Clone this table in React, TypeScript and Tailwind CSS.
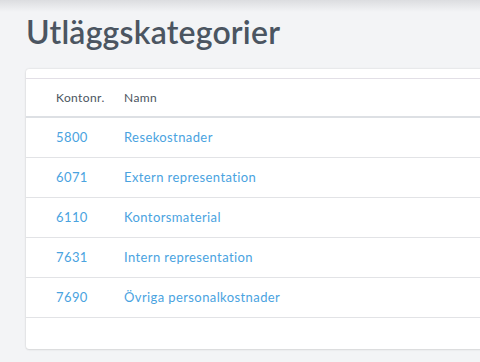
import React from "react";

const rows = [
  { nr: "5800", name: "Resekostnader" },
  { nr: "6071", name: "Extern representation" },
  { nr: "6110", name: "Kontorsmaterial" },
  { nr: "7631", name: "Intern representation" },
  { nr: "7690", name: "Övriga personalkostnader" },
];

export default function App() {
  return (
    <div
      className="relative w-[480px] h-[362px] overflow-hidden bg-[#f3f4f6]"
      style={{ fontFamily: "Lato, 'Noto Sans', sans-serif" }}
    >
      {/* shadow from the app bar above */}
      <div className="absolute left-0 right-0 top-0 h-[12px] bg-gradient-to-b from-[#dcdde0] to-[#f3f4f6]" />
      <div className="relative pl-[26px] pt-[12px]">
        <h1 className="text-[32px] leading-[40px] font-semibold text-[#4b5561] tracking-[0.2px]">
          Utläggskategorier
        </h1>
        <div className="mt-[17px] w-[480px] h-[280px] bg-white rounded-[3px] shadow-[0_0_2px_rgba(0,0,0,0.15),0_1px_2px_rgba(0,0,0,0.08)] pt-[9px]">
          <div className="border-t border-[#e2dfe6]">
            <div className="flex items-center h-[39px] border-b-2 border-[#dde0e4] text-[12px] text-[#4b5561] tracking-[0.4px]">
              <div className="pl-[30px] w-[98px]">Kontonr.</div>
              <div>Namn</div>
            </div>
            {rows.map((r) => (
              <div
                key={r.nr}
                className="flex items-center h-[40px] border-b border-[#e2e3e6] text-[13px] text-[#4aa3df] tracking-[0.4px]"
              >
                <div className="pl-[30px] w-[98px]">{r.nr}</div>
                <div>{r.name}</div>
              </div>
            ))}
          </div>
        </div>
      </div>
    </div>
  );
}
